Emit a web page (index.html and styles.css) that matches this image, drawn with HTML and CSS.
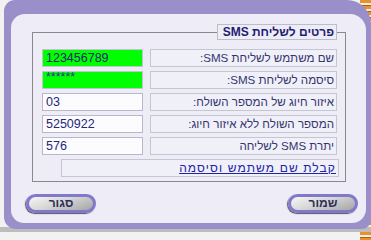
FILE: index.html
```html
<!DOCTYPE html>
<html lang="he">
<head>
<meta charset="utf-8">
<title>פרטים לשליחת SMS</title>
<link rel="stylesheet" href="styles.css">
</head>
<body>
<div class="frame">
  <div class="panel">
    <div class="group">
      <div class="legend">פרטים לשליחת SMS</div>
      <div class="row">
        <div class="label">שם משתמש לשליחת SMS:</div>
        <div class="input green">123456789</div>
      </div>
      <div class="row">
        <div class="label">סיסמה לשליחת SMS:</div>
        <div class="input green pass">******</div>
      </div>
      <div class="row">
        <div class="label">איזור חיוג של המספר השולח:</div>
        <div class="input">03</div>
      </div>
      <div class="row">
        <div class="label">המספר השולח ללא איזור חיוג:</div>
        <div class="input">5250922</div>
      </div>
      <div class="row">
        <div class="label">יתרת SMS לשליחה</div>
        <div class="input">576</div>
      </div>
      <div class="linkrow"><a href="#" class="link">קבלת שם משתמש וסיסמה</a></div>
    </div>
    <div class="buttons">
      <div class="btn save">שמור</div>
      <div class="btn close">סגור</div>
    </div>
  </div>
</div>
</body>
</html>
```
FILE: styles.css
```css
html, body {
  margin: 0;
  padding: 0;
}
body {
  width: 371px;
  height: 232px;
  overflow: hidden;
  font-family: "Liberation Sans", "DejaVu Sans", Arial, sans-serif;
  font-size: 12px;
  direction: rtl;
  background:
    linear-gradient(#0000 0 227px, #bdbdbd 227px),
    linear-gradient(90deg, #f2f2f2 0 360px, #0000 360px),
    repeating-linear-gradient(#e8922e 0 3px, #fbeee0 3px 5px, #a0602a 5px 6px);
}
.frame {
  width: 367px;
  height: 229px;
  box-sizing: border-box;
  background: #9a8fc9;
  border-radius: 11px 24px 9px 12px;
  padding: 14px 5px 6px 7px;
}
.panel {
  height: 209px;
  background: #eeedf7;
  border-radius: 14px 16px 14px 13px;
  display: flex;
  flex-direction: column;
  padding-top: 18px;
  box-sizing: border-box;
}
.group {
  margin: 0 20px 0 21px;
  border: 1px solid #8a8a8e;
  display: flex;
  flex-direction: column;
  gap: 4px;
  padding: 0 8px 4px 8px;
  height: 150px;
  box-sizing: border-box;
}
.legend {
  align-self: flex-start;
  margin-top: -9px;
  margin-bottom: 5px;
  height: 16px;
  width: 120px;
  box-sizing: border-box;
  border: 1px solid #bdbdca;
  background: #eeedf7;
  color: #1e1e70;
  font-weight: bold;
  font-size: 12px;
  line-height: 14px;
  padding-right: 2px;
}
.row {
  display: flex;
  gap: 7px;
  height: 18px;
}
.label {
  width: 187px;
  box-sizing: border-box;
  border: 1px solid #c6c6d2;
  background: #f0f0f8;
  color: #34346e;
  font-size: 11.6px;
  line-height: 16px;
  padding-right: 2px;
  white-space: nowrap;
}
.input {
  width: 101px;
  box-sizing: border-box;
  border: 1px solid #b8b8c8;
  background: #fcfcff;
  color: #25257a;
  direction: ltr;
  text-align: left;
  font-size: 12.5px;
  line-height: 16px;
  padding-left: 3px;
}
.green {
  background: #00ff00;
  border-color: #c4c4d0;
}
.pass {
  line-height: 10px;
  color: #3030a0;
}
.linkrow {
  margin-right: -2px;
  margin-left: 20px;
  height: 18px;
  box-sizing: border-box;
  border: 1px solid #c6c6d2;
  background: #f0f0f8;
  line-height: 16px;
  padding-right: 2px;
  white-space: nowrap;
}
.link {
  color: #2222a6;
  text-decoration: underline;
  font-size: 12px;
  letter-spacing: 1.1px;
}
.buttons {
  display: flex;
  justify-content: space-between;
  margin: 12px 8px 0 15px;
}
.btn {
  width: 70px;
  height: 19px;
  box-sizing: border-box;
  border: 3px solid #8178cc;
  border-radius: 10px;
  background: linear-gradient(160deg, #f6f6f6 0%, #d6d6d6 45%, #a4a4a4 100%);
  box-shadow: -1px 1px 1px #555566;
  color: #2e2e58;
  font-weight: bold;
  font-size: 12px;
  line-height: 13px;
  text-align: center;
}
```
